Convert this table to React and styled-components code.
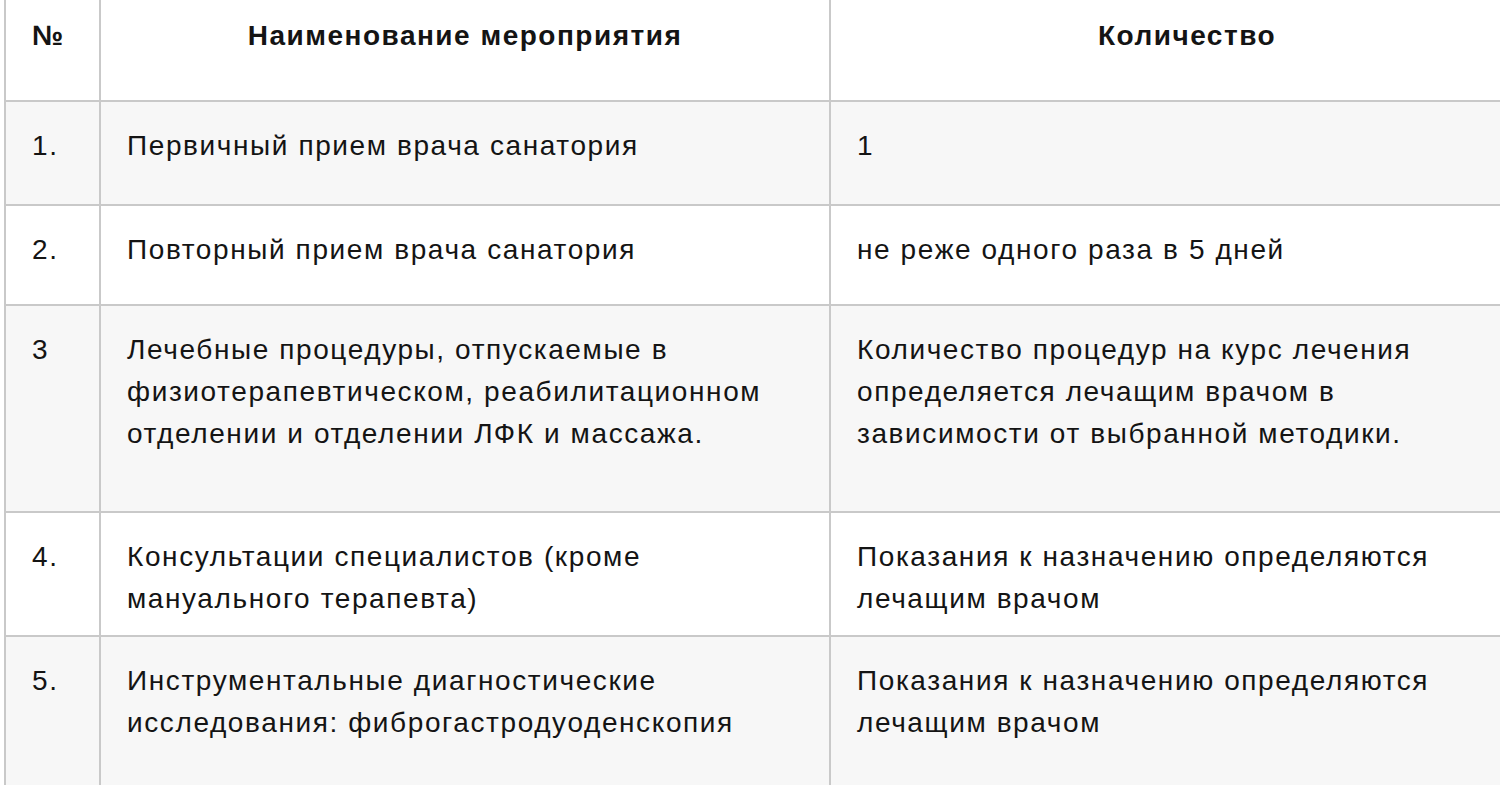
import styled, { createGlobalStyle } from "styled-components";

const GlobalStyle = createGlobalStyle`
    html, body {
        margin: 0;
        padding: 0;
        background: #fff;
        overflow: hidden;
    }
`;

const rows = [
    {num: "1.", name: ["Первичный прием врача санатория"], count: ["1"], height: 104},
    {num: "2.", name: ["Повторный прием врача санатория"], count: ["не реже одного раза в 5 дней"], height: 100},
    {
        num: "3",
        name: ["Лечебные процедуры, отпускаемые в", "физиотерапевтическом, реабилитационном", "отделении и отделении ЛФК и массажа."],
        count: ["Количество процедур на курс лечения", "определяется лечащим врачом в", "зависимости от выбранной методики."],
        height: 207,
    },
    {
        num: "4.",
        name: ["Консультации специалистов (кроме", "мануального терапевта)"],
        count: ["Показания к назначению определяются", "лечащим врачом"],
        height: 124,
    },
    {
        num: "5.",
        name: ["Инструментальные диагностические", "исследования: фиброгастродуоденскопия"],
        count: ["Показания к назначению определяются", "лечащим врачом"],
        height: 180,
    },
];

function App() {
    return (
        <>
            <GlobalStyle/>
            <Page>
                <Table>
                    <colgroup>
                        <col style={{width: 95}}/>
                        <col style={{width: 730}}/>
                        <col style={{width: 714}}/>
                    </colgroup>
                    <thead>
                        <Row $height={106}>
                            <HeadCell $align="left">№</HeadCell>
                            <HeadCell>Наименование мероприятия</HeadCell>
                            <HeadCell>Количество</HeadCell>
                        </Row>
                    </thead>
                    <tbody>
                        {rows.map((row, i) => (
                            <Row key={row.num} $height={row.height} $shaded={i % 2 === 0}>
                                <Cell>{row.num}</Cell>
                                <Cell>{row.name.map((line) => <Line key={line}>{line}</Line>)}</Cell>
                                <Cell>{row.count.map((line) => <Line key={line}>{line}</Line>)}</Cell>
                            </Row>
                        ))}
                    </tbody>
                </Table>
            </Page>
        </>
    );
}

export const Page = styled.div`
    width: 1500px;
    height: 785px;
    overflow: hidden;
    padding-left: 4px;
    font-family: "Liberation Sans", Arial, sans-serif;
    color: #141414;
`;

export const Table = styled.table`
    width: 1540px;
    margin-top: -5px;
    table-layout: fixed;
    border-collapse: collapse;
    font-size: 28px;
    line-height: 42px;
    letter-spacing: 1.6px;
`;

export const Row = styled.tr`
    height: ${({$height}) => $height}px;
    background: ${({$shaded}) => ($shaded ? "#f7f7f7" : "#fff")};
`;

export const HeadCell = styled.th`
    vertical-align: top;
    text-align: ${({$align}) => $align || "center"};
    padding: 20px 26px 0;
    font-weight: 700;
    letter-spacing: 1.5px;
    border: 2px solid #c9c9c9;
    border-top: none;
`;

export const Cell = styled.td`
    vertical-align: top;
    padding: 23px 26px 0;
    border: 2px solid #c9c9c9;
`;

export const Line = styled.div`
    white-space: nowrap;
`;

export default App;
